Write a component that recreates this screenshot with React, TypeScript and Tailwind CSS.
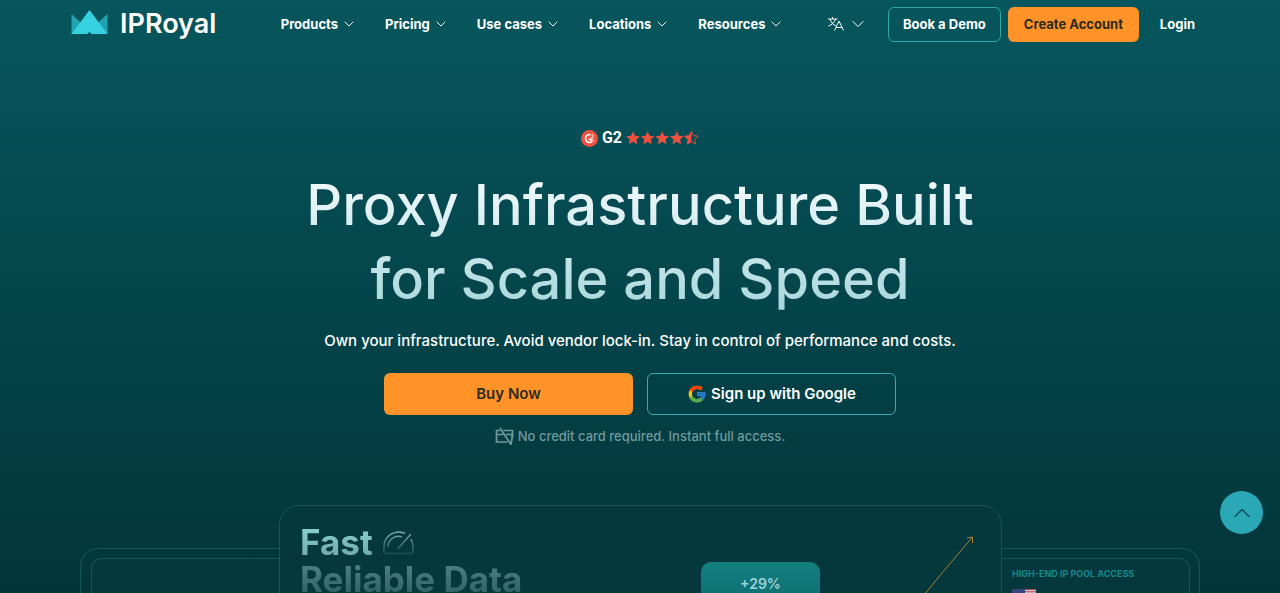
import type { ReactNode } from "react";
import { ChevronDown, ChevronUp } from "lucide-react";
import { FcGoogle } from "react-icons/fc";

const NAV_ITEMS = ["Products", "Pricing", "Use cases", "Locations", "Resources"];

const STAR = "M12 0.500l3.500 7.500 8.200.9-6.100 5.500 1.700 8.100L12 18.400l-7.300 4.100 1.700-8.100L.3 8.900l8.200-.9z";
const HALF_STAR = "M12 0.500v17.900l-7.300 4.100 1.700-8.100L.3 8.900l8.200-.9z";

function Logo() {
  return (
    <a href="#" aria-label="IPRoyal" className="flex items-center gap-3 pb-1 text-white">
      <svg width="37" height="25" viewBox="0 0 37 25" aria-hidden>
        <path d="M0.500 4L12 14.500V24H0.500z" fill="#22a3b1" />
        <path d="M36.500 4L25 14.500V24h11.500z" fill="#22a3b1" />
        <path d="M18.500 0L36.500 24H20.500l-2-2.200-2 2.200H0.500z" fill="#37d2df" />
      </svg>
      <span className="pt-1 text-[27px] leading-8 font-semibold">IPRoyal</span>
    </a>
  );
}

function TranslateIcon() {
  return (
    <svg
      width="18"
      height="16"
      viewBox="0 0 18 16"
      fill="none"
      stroke="currentColor"
      strokeWidth="1"
      strokeLinejoin="round"
      aria-hidden
    >
      <path d="M1 3h9.500M5.500 1v2M3 3c.8 3.200 3 5.600 6 6.800M8.500 3C7.700 6.200 5 8.800 1.500 10" />
      <path d="M7.500 14.500L12 5l4.500 9.500M9.200 11.500h5.600" />
    </svg>
  );
}

function Rating() {
  return (
    <div className="flex items-center gap-1" role="img" aria-label="Rated 4.5 stars on G2">
      <svg width="17" height="17" viewBox="0 0 17 17" fill="none" aria-hidden>
        <circle cx="8.500" cy="8.500" r="8.500" fill="#f0503f" />
        <path d="M9.800 4.700A4 4 0 1 0 10.900 11.700L9.700 9.400H7.600" stroke="#fff" strokeWidth="1.600" />
        <path d="M10.400 5.300c.3-1 2-.8 1.800.3-.1.800-1.700 1.100-1.800 2h2.200M9.600 9.200h2l1.200 2" stroke="#fff" strokeWidth="0.900" />
      </svg>
      <span className="font-['Roboto',sans-serif] text-base leading-5 font-bold text-white">G2</span>
      <svg width="73" height="14" viewBox="0 0 125 24" aria-hidden>
        {[0, 1, 2, 3].map((n) => (
          <path key={n} d={STAR} transform={`translate(${n * 25} 0)`} fill="#f0503f" />
        ))}
        <g transform="translate(100 0)">
          <path d={STAR} fill="none" stroke="#f0503f" strokeWidth="1.500" />
          <path d={HALF_STAR} fill="#f0503f" />
        </g>
      </svg>
    </div>
  );
}

function NoCardIcon() {
  return (
    <svg width="19" height="18" viewBox="0 0 19 18" fill="none" stroke="currentColor" strokeWidth="1.700" aria-hidden>
      <path d="M5 3.500H1.500v11.500h11M8.500 3.500h9v8M1.500 7.500h6.500M11 7.500h6.500" />
      <path d="M5 1l11 16.500L17.500 8" />
    </svg>
  );
}

function SpeedIcon() {
  return (
    <svg width="31" height="24" viewBox="0 0 31 24" fill="none" strokeWidth="1.500" strokeLinecap="round" aria-hidden>
      <defs>
        <linearGradient id="speed" x1="0" y1="0" x2="0" y2="24" gradientUnits="userSpaceOnUse">
          <stop stopColor="#79b3b5" />
          <stop offset="1" stopColor="#16494d" />
        </linearGradient>
      </defs>
      <g stroke="url(#speed)">
        <path d="M21.500 2.300A14.500 14.500 0 0 0 1 15.500v5.500q0 1.500 1.500 1.500h26q1.500 0 1.500-1.500v-5.500q0-4-2-7" />
        <path d="M5 15.500A10.500 10.500 0 0 1 18.500 5.800" />
        <path d="M15 17.500L27.500 3.500" />
      </g>
    </svg>
  );
}

function TrendArrow() {
  return (
    <svg width="50" height="60" viewBox="0 0 50 60" fill="none" stroke="#a6832c" strokeWidth="1" aria-hidden>
      <path d="M0 59L18 37 48.500 1M43 2l5.500-1v6" />
    </svg>
  );
}

function SideCard({ side, children }: { side: "left" | "right"; children?: ReactNode }) {
  const outer =
    side === "left"
      ? "rounded-tl-[18px] border-l pl-[10px]"
      : "rounded-tr-[18px] border-r pr-[9px]";
  const inner = side === "left" ? "rounded-tl-[10px] border-l" : "rounded-tr-[10px] border-r";
  return (
    <div className={`mt-[43px] min-w-0 flex-1 border-t border-[#12575a] pt-[9px] ${outer}`}>
      <div className={`h-full border-t border-[#12575a] bg-[#04383d] px-[10px] pt-2 ${inner}`}>{children}</div>
    </div>
  );
}

function Header() {
  return (
    <header className="flex h-12 shrink-0 items-center justify-between pr-[85px] pl-[71px]">
      <Logo />
      <nav aria-label="Main" className="flex items-center gap-7 pl-[22px]">
        {NAV_ITEMS.map((label) => (
          <button key={label} type="button" className="flex items-center gap-[3px] text-[13px] leading-5 font-bold">
            {label}
            <ChevronDown size={16} strokeWidth={1.500} />
          </button>
        ))}
      </nav>
      <div className="flex items-center text-[13px] leading-5 font-bold">
        <button type="button" aria-label="Change language" className="mr-5 flex items-center gap-[3px]">
          <TranslateIcon />
          <ChevronDown size={20} strokeWidth={1.200} />
        </button>
        <a
          href="#"
          className="flex h-[35px] w-[113px] items-center justify-center rounded-md border border-[#2ba7a6]"
        >
          Book a Demo
        </a>
        <a
          href="#"
          className="ml-[7px] flex h-[35px] w-[131px] items-center justify-center rounded-md bg-[#ff9328] text-[#2b2b20]"
        >
          Create Account
        </a>
        <a href="#" className="ml-[21px]">
          Login
        </a>
      </div>
    </header>
  );
}

export default function App() {
  return (
    <div className="flex h-screen flex-col overflow-hidden bg-linear-to-b from-[#07565d] to-[#02353a] font-['Inter',sans-serif] text-white">
      <Header />

      <main className="flex min-h-0 flex-1 flex-col">
        <section className="flex shrink-0 flex-col items-center pt-20 text-center">
          <Rating />
          <h1 className="mt-5 bg-linear-to-b from-[#f0f9fb] from-10% to-[#a3d5da] bg-clip-text text-[56px] leading-[74px] font-medium text-transparent">
            Proxy Infrastructure Built
            <br />
            for Scale and Speed
          </h1>
          <p className="mt-[13px] text-[15px] leading-6 font-medium">
            Own your infrastructure. Avoid vendor lock-in. Stay in control of performance and costs.
          </p>
          <div className="mt-5 flex gap-[14px] text-[15px] font-semibold">
            <a
              href="#"
              className="flex h-[42px] w-[249px] items-center justify-center rounded-md bg-[#ff9328] text-[#2b2b20]"
            >
              Buy Now
            </a>
            <button
              type="button"
              className="flex h-[42px] w-[249px] items-center justify-center gap-1 rounded-md border border-[#35aeab]"
            >
              <FcGoogle size={20} />
              Sign up with Google
            </button>
          </div>
          <p className="mt-[11px] flex items-center gap-1 text-[13px] leading-5 font-medium text-[#719a9d]">
            <NoCardIcon />
            No credit card required. Instant full access.
          </p>
        </section>

        <section className="mt-[59px] flex min-h-0 flex-1 px-20">
          <SideCard side="left" />
          <div className="flex h-[240px] w-[723px] shrink-0 items-start rounded-t-[20px] border border-[#12575a] bg-[#04383d] pr-[27px] pl-[20px]">
            <h2 className="pt-[18px] text-[35px] leading-[37px] font-bold">
              <span className="flex items-center gap-[10px]">
                <span className="bg-linear-to-b from-[#8fd3d4] to-[#6aa5a8] bg-clip-text text-transparent">Fast</span>
                <SpeedIcon />
              </span>
              <span className="block bg-linear-to-b from-[#4f8387] to-[#2b5e62] bg-clip-text text-transparent">
                Reliable Data
              </span>
            </h2>
            <div className="mt-14 ml-auto flex h-20 w-[119px] justify-center rounded-t-[10px] bg-linear-to-b from-[#12807f] to-[#0c5c60] pt-3 text-sm leading-5 font-semibold text-[#9fd3da]">
              +29%
            </div>
            <div className="mt-[30px] ml-[104px]">
              <TrendArrow />
            </div>
          </div>
          <SideCard side="right">
            <p className="text-[9px] leading-[14px] font-bold whitespace-nowrap text-[#15898c]">
              HIGH-END IP POOL ACCESS
            </p>
            <svg width="24" height="14" viewBox="0 0 24 14" className="mt-2" aria-hidden>
              <path d="M0 0h24v14H0z" fill="#c9ced2" />
              <path d="M0 0h24v1H0zM0 2.200h24v1.100H0zM0 4.400h24v1.100H0z" fill="#b8454f" />
              <path d="M0 0h13v8H0z" fill="#34457c" />
            </svg>
          </SideCard>
        </section>
      </main>

      <button
        type="button"
        aria-label="Back to top"
        className="fixed right-[17px] bottom-[59px] flex size-[43px] items-center justify-center rounded-full bg-[#2ba8b5] text-[#06474e]"
      >
        <ChevronUp size={28} strokeWidth={1} />
      </button>
    </div>
  );
}
